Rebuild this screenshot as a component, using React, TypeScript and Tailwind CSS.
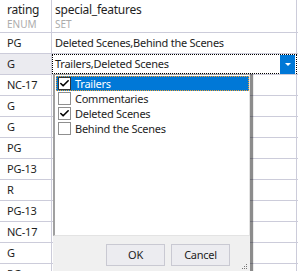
import { Check } from 'lucide-react';

const ratings = ['PG', 'G', 'NC-17', 'G', 'G', 'PG', 'PG-13', 'R', 'PG-13', 'NC-17', 'G', 'PG'];
const features = ['Deleted Scenes,Behind the Scenes', 'Trailers,Deleted Scenes'];
const options = [
  { label: 'Trailers', checked: true },
  { label: 'Commentaries', checked: false },
  { label: 'Deleted Scenes', checked: true },
  { label: 'Behind the Scenes', checked: false },
];

function Box({ checked, active }: { checked: boolean; active?: boolean }) {
  return (
    <span className={`flex h-[13px] w-[13px] shrink-0 items-center justify-center border bg-white ${active ? 'border-[#333]' : 'border-[#8f8f8f]'}`}>
      {checked && <Check size={11} strokeWidth={3.5} className="text-black" />}
    </span>
  );
}

export default function App() {
  return (
    <div className="relative h-[271px] w-[298px] overflow-hidden bg-white text-[11px] tracking-[-0.25px] text-[#1e1e1e] [font-family:'Noto_Sans',sans-serif]">
      <div className="grid grid-cols-[52px_245px] border-b border-[#ccccda]">
        <div className="flex h-[32px] flex-col border-r border-[#ccccda] pl-[7px] pt-[2px]">
          <span className="text-[12px] leading-[16px]">rating</span>
          <span className="text-[10px] leading-[12px] tracking-normal text-[#acacac]">ENUM</span>
        </div>
        <div className="flex h-[32px] flex-col border-r border-[#ccccda] pl-[3px] pt-[2px]">
          <span className="text-[12px] leading-[16px]">special_features</span>
          <span className="text-[10px] leading-[12px] tracking-normal text-[#acacac]">SET</span>
        </div>
      </div>
      {ratings.map((r, i) => (
        <div key={i} className="grid grid-cols-[52px_245px] border-b border-[#ccccda]">
          <div className={`flex h-[20px] items-center border-r border-[#ccccda] pl-[7px] ${i === 1 ? 'bg-[#ebebf0]' : ''}`}>{r}</div>
          {i === 1 ? (
            <div className="relative flex h-[20px] items-center border border-dotted border-black pl-[2px]">
              <span>{features[i]}</span>
              <span className="absolute right-[1px] top-0 flex h-[19px] w-[15px] items-center justify-center bg-[#0078d7]">
                <span className="h-0 w-0 border-x-[3px] border-t-[3px] border-x-transparent border-t-white" />
              </span>
            </div>
          ) : (
            <div className="flex h-[20px] items-center border-r border-[#ccccda] pl-[3px]">{features[i] ?? ''}</div>
          )}
        </div>
      ))}

      <div className="absolute left-[53px] top-[74px] flex h-[200px] w-[197px] flex-col bg-[#f0f0f0] shadow-[3px_0_1px_rgba(0,0,0,0.45)]">
        <div className="flex h-[162px] flex-col border-l-2 border-t border-[#a0a0a0] border-r border-r-[#e3e3e3] border-b border-b-[#e3e3e3] bg-white pt-px pl-px">
          {options.map((o, i) => (
            <div
              key={o.label}
              className={`flex h-[15px] items-center gap-[4px] pl-[2px] ${i === 0 ? 'bg-[#0078d7] text-white outline-1 outline-dotted outline-[#f0a030] -outline-offset-1' : ''}`}
            >
              <Box checked={o.checked} active={i === 0} />
              <span className="leading-[15px]">{o.label}</span>
            </div>
          ))}
        </div>
        <div className="relative flex flex-1 gap-[6px] pl-[53px] pt-[8px]">
          <button className="h-[22px] w-[59px] border border-[#c9c9d2] bg-[#ececf0] text-[11px] text-[#1e1e1e]">OK</button>
          <button className="h-[22px] w-[59px] border border-[#c9c9d2] bg-[#ececf0] text-[11px] text-[#1e1e1e]">Cancel</button>
          <svg className="absolute left-[189px] top-[28px]" width="6" height="6" viewBox="0 0 6 6">
            <rect x="4" y="0" width="1" height="1" fill="#777" />
            <rect x="2" y="2" width="1" height="1" fill="#777" />
            <rect x="4" y="2" width="1" height="1" fill="#777" />
            <rect x="0" y="4" width="1" height="1" fill="#777" />
            <rect x="2" y="4" width="1" height="1" fill="#777" />
            <rect x="4" y="4" width="1" height="1" fill="#777" />
          </svg>
        </div>
      </div>
    </div>
  );
}
